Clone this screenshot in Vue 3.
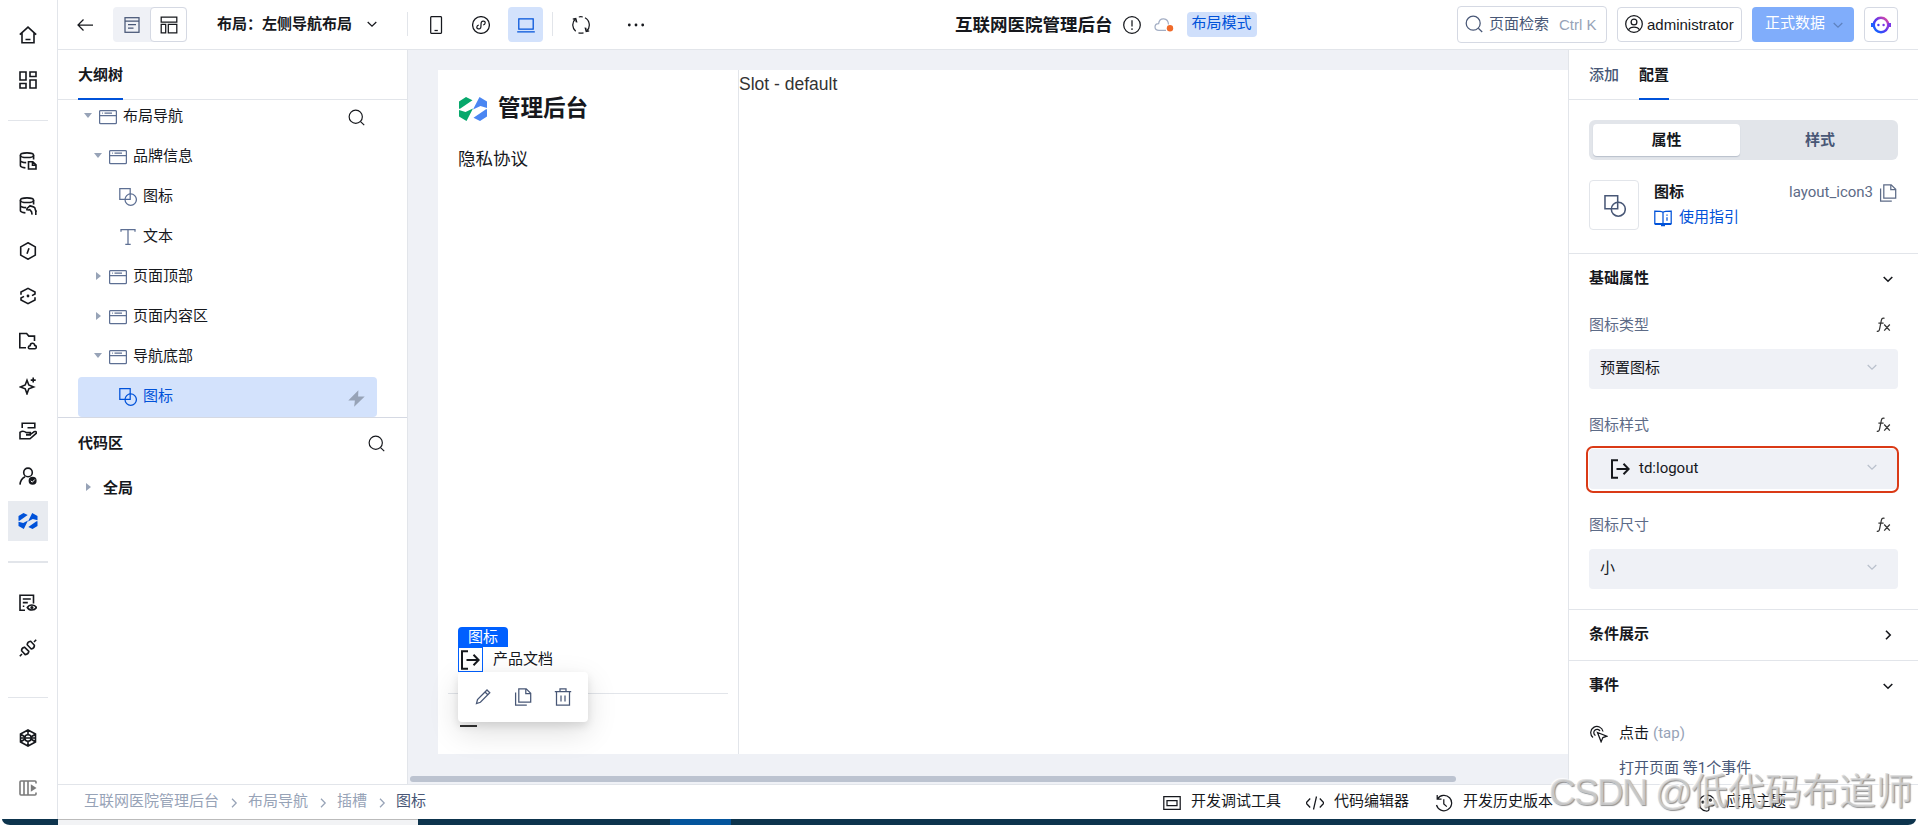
<template>
  <div class="screen">
    <div class="app">
      <aside class="rail">
        <template v-for="item in railItems" :key="item.name">
          <div v-if="item.line" class="rail-line" :class="item.name"></div>
          <div v-else class="rail-item" :class="[item.name, { active: item.active }]">
            <svg class="icon" viewBox="0 0 18 18" v-html="icons[item.name]"></svg>
          </div>
        </template>
      </aside>

      <div class="workspace">
        <header class="header">
          <svg class="icon back" viewBox="0 0 18 18" v-html="icons.back"></svg>
          <div class="view-switch">
            <div class="view-btn">
              <svg class="icon" viewBox="0 0 18 18" v-html="icons.page"></svg>
            </div>
            <div class="view-btn current">
              <svg class="icon" viewBox="0 0 18 18" v-html="icons.layout"></svg>
            </div>
          </div>
          <span class="layout-name">布局：左侧导航布局</span>
          <svg class="icon chevron" viewBox="0 0 18 18" v-html="icons.down"></svg>
          <i class="split"></i>
          <div class="device phone"><svg class="icon" viewBox="0 0 18 18" v-html="icons.phone"></svg></div>
          <div class="device"><svg class="icon" viewBox="0 0 18 18" v-html="icons.mini"></svg></div>
          <div class="device selected"><svg class="icon" viewBox="0 0 18 18" v-html="icons.laptop"></svg></div>
          <i class="split second"></i>
          <svg class="icon refresh" viewBox="0 0 18 18" v-html="icons.refresh"></svg>
          <svg class="icon more" viewBox="0 0 18 18" v-html="icons.more"></svg>

          <div class="app-title">
            <h1>互联网医院管理后台</h1>
            <svg class="icon" viewBox="0 0 18 18" v-html="icons.info"></svg>
            <svg class="icon cloud" viewBox="0 0 20 18" v-html="icons.cloud"></svg>
            <span class="mode">布局模式</span>
          </div>

          <div class="header-right">
            <div class="search-box">
              <svg class="icon" viewBox="0 0 18 18" v-html="icons.search"></svg>
              <span>页面检索</span>
              <em>Ctrl K</em>
            </div>
            <div class="user-box">
              <svg class="icon" viewBox="0 0 18 18" v-html="icons.account"></svg>
              <span>administrator</span>
            </div>
            <div class="data-btn">
              <span>正式数据</span>
              <svg class="icon" viewBox="0 0 18 18" v-html="icons.down"></svg>
            </div>
            <div class="bot-box">
              <svg class="bot" viewBox="0 0 20 20">
                <defs>
                  <linearGradient id="bot" x1="0" y1="1" x2="1" y2="0">
                    <stop offset="0.1" stop-color="#1263ff" />
                    <stop offset="0.5" stop-color="#5b35f0" />
                    <stop offset="1" stop-color="#f04a9a" />
                  </linearGradient>
                </defs>
                <circle cx="10" cy="10" r="7.2" fill="none" stroke="url(#bot)" stroke-width="2.4" />
                <path d="M0 8h3v4H0z" fill="#1e5fff" />
                <path d="M17 8h3v4h-3z" fill="#7a35e8" />
                <circle cx="7.4" cy="10" r="1.2" fill="#4a3cf5" />
                <circle cx="12.6" cy="10" r="1.2" fill="#7a35e8" />
              </svg>
            </div>
          </div>
        </header>

        <div class="body">
          <section class="outline">
            <div class="tabs"><span class="tab on">大纲树</span></div>
            <div class="tree">
              <div
                v-for="(node, i) in tree"
                :key="i"
                class="node"
                :class="['level-' + node.level, { chosen: node.chosen }]"
              >
                <i class="caret" :class="node.caret"></i>
                <svg class="icon" viewBox="0 0 18 18" v-html="icons[node.icon]"></svg>
                <span>{{ node.label }}</span>
                <svg v-if="i === 0" class="icon tail" viewBox="0 0 18 18" v-html="icons.search"></svg>
                <svg v-if="node.chosen" class="icon tail bolt" viewBox="0 0 18 18" v-html="icons.bolt"></svg>
              </div>
            </div>
            <div class="code-head">
              <span>代码区</span>
              <svg class="icon" viewBox="0 0 18 18" v-html="icons.search"></svg>
            </div>
            <div class="code-row">
              <i class="caret right"></i>
              <span>全局</span>
            </div>
          </section>

          <main class="canvas">
            <div class="page">
              <nav class="page-nav">
                <div class="brand">
                  <svg class="brand-logo" viewBox="0 0 28 24" v-html="icons.brand"></svg>
                  <b>管理后台</b>
                </div>
                <div class="nav-entry">隐私协议</div>
                <div class="nav-bottom">
                  <div class="picked">
                    <span class="picked-tag">图标</span>
                    <svg class="logout" viewBox="0 0 20 20" v-html="icons.logout"></svg>
                    <div class="picked-tools">
                      <svg class="icon" viewBox="0 0 18 18" v-html="icons.pencil"></svg>
                      <svg class="icon" viewBox="0 0 18 18" v-html="icons.copy"></svg>
                      <svg class="icon" viewBox="0 0 18 18" v-html="icons.trash"></svg>
                    </div>
                  </div>
                  <span>产品文档</span>
                </div>
                <div class="nav-fold"><i></i></div>
              </nav>
              <div class="page-slot">Slot - default</div>
            </div>
            <div class="scrollbar"></div>
          </main>

          <aside class="config">
            <div class="tabs">
              <span class="tab">添加</span>
              <span class="tab on">配置</span>
            </div>
            <div class="segment">
              <span class="on">属性</span>
              <span>样式</span>
            </div>
            <div class="comp">
              <div class="comp-thumb">
                <svg class="icon" viewBox="0 0 18 18" v-html="icons.shape"></svg>
              </div>
              <div class="comp-info">
                <b>图标</b>
                <a><svg class="icon" viewBox="0 0 18 18" v-html="icons.guide"></svg>使用指引</a>
              </div>
              <div class="comp-id">
                <span>layout_icon3</span>
                <svg class="icon" viewBox="0 0 18 18" v-html="icons.copy"></svg>
              </div>
            </div>
            <div class="group props">
              <div class="group-head">
                <span>基础属性</span>
                <svg class="icon" viewBox="0 0 18 18" v-html="icons.down"></svg>
              </div>
              <div v-for="field in fields" :key="field.label" class="field">
                <div class="field-label">
                  <span>{{ field.label }}</span>
                  <svg class="icon fx" viewBox="0 0 18 18" v-html="icons.fx"></svg>
                </div>
                <div class="select" :class="{ marked: field.marked }">
                  <svg v-if="field.icon" class="logout" viewBox="0 0 20 20" v-html="icons.logout"></svg>
                  <span>{{ field.value }}</span>
                  <svg class="icon arrow" viewBox="0 0 18 18" v-html="icons.down"></svg>
                </div>
              </div>
            </div>
            <div class="group">
              <div class="group-head">
                <span>条件展示</span>
                <svg class="icon" viewBox="0 0 18 18" v-html="icons.right"></svg>
              </div>
            </div>
            <div class="group">
              <div class="group-head">
                <span>事件</span>
                <svg class="icon" viewBox="0 0 18 18" v-html="icons.down"></svg>
              </div>
              <div class="event">
                <svg class="icon" viewBox="0 0 18 18" v-html="icons.tap"></svg>
                <span>点击</span>
                <em>(tap)</em>
              </div>
              <div class="event-desc">打开页面 等1个事件</div>
            </div>
          </aside>
        </div>

        <footer class="footer">
          <div class="crumbs">
            <template v-for="(crumb, i) in crumbs" :key="crumb">
              <svg v-if="i" class="icon" viewBox="0 0 18 18" v-html="icons.right"></svg>
              <span :class="{ last: i === crumbs.length - 1 }">{{ crumb }}</span>
            </template>
          </div>
          <div class="tools">
            <div v-for="tool in tools" :key="tool.icon" class="tool" :class="tool.icon">
              <svg class="icon" viewBox="0 0 18 18" v-html="icons[tool.icon]"></svg>
              <span>{{ tool.label }}</span>
            </div>
          </div>
        </footer>
      </div>
    </div>
    <div class="taskbar">
      <div class="task-light"></div>
      <div class="task-active"></div>
    </div>
    <div class="watermark"><span>CSDN @</span>低代码布道师</div>
  </div>
</template>

<script setup>
// 左侧导航
const railItems = [
  { name: 'home' },
  { name: 'board' },
  { name: 'line-1', line: true },
  { name: 'dbFile' },
  { name: 'dbLink' },
  { name: 'hexCode' },
  { name: 'layers' },
  { name: 'folder' },
  { name: 'sparkle' },
  { name: 'hand' },
  { name: 'member' },
  { name: 'brandMono', active: true },
  { name: 'line-2', line: true },
  { name: 'docEye' },
  { name: 'plug' },
  { name: 'line-3', line: true },
  { name: 'cube' },
  { name: 'expand' }
];

// 大纲树
const tree = [
  { label: '布局导航', level: 0, icon: 'box', caret: 'down' },
  { label: '品牌信息', level: 1, icon: 'box', caret: 'down' },
  { label: '图标', level: 2, icon: 'shape' },
  { label: '文本', level: 2, icon: 'text' },
  { label: '页面顶部', level: 1, icon: 'box', caret: 'right' },
  { label: '页面内容区', level: 1, icon: 'box', caret: 'right' },
  { label: '导航底部', level: 1, icon: 'box', caret: 'down' },
  { label: '图标', level: 2, icon: 'shape', chosen: true }
];

const fields = [
  { label: '图标类型', value: '预置图标' },
  { label: '图标样式', value: 'td:logout', icon: true, marked: true },
  { label: '图标尺寸', value: '小' }
];

const crumbs = ['互联网医院管理后台', '布局导航', '插槽', '图标'];

const tools = [
  { icon: 'debug', label: '开发调试工具' },
  { icon: 'code', label: '代码编辑器' },
  { icon: 'history', label: '开发历史版本' },
  { icon: 'theme', label: '应用主题' }
];

const db = '<ellipse cx="8" cy="3.2" rx="6.6" ry="2.3"/><path d="M1.4 3.2v10.3c0 1.2 2 2.1 5 2.4M14.6 3.2v4.3M1.4 8.2c0 1.2 2.6 2.3 5.8 2.4"/>';

// 图标路径
const icons = {
  home: '<path d="M.8 8.6 9 1.2l8.2 7.4M3 7v9.8h12V7M6.5 13.5h5"/>',
  board: '<path d="M1 1h6v8H1zM11 1h6v4.5h-6zM11 9h6v8h-6zM1 12.5h6V17H1z"/>',
  dbFile: db + '<path d="M9.5 9.8h4.3l3.2 3.1V17H9.5zM13.5 9.8v3.4H17"/>',
  dbLink: db + '<path d="M8.2 13.2c-.8-1.200 0-2.200 1-2.900l1.800-1.500c1.500.9 3.500.3 4.800 2l.8 2.700 1.200 1.200M8.500 13.200l2.200-.6 1.800 2 .6 3M16.800 14v4"/>',
  hexCode: '<path d="M9 .8l7.3 4.1v8.2L9 17.2l-7.3-4.1V4.9zM10 6.2l-2 5.6"/>',
  layers: '<path d="M2 7.800V5l7-3.700L16 5v2l-3 1.600M16 10.200V13l-7 3.700L2 13v-2l3-1.600"/><circle cx="9" cy="9" r="1.400" fill="currentColor" stroke="none"/>',
  folder: '<path d="M7 15.8H.8V1.500h6.800l2.200 2.600h5.700V9M10.500 16.700h5.300c2 0 2-3.200-.1-3.300-.5-3-4.300-2.700-4.500.2-2.200.3-2.300 3-.7 3.100z"/>',
  sparkle: '<path d="M8 3.200 9.800 8l4.800 2-4.800 1.800L8 16.800 6.200 11.800 1.400 10l4.800-2zM14.200.6v5M11.700 3.100h5"/>',
  hand: '<path d="M3.200 6V1.300h12.600v4.500H8.500M1 9.800v7h10l6.400-5.600c.3-1.900-1.800-2.200-3.200-.9l-2.800 2M1 10.300c2.400-1.800 4.200-1.400 6.300.3h3.900v2.300H7"/>',
  member: '<circle cx="9" cy="5.400" r="4.300"/><path d="M1 17.600c.2-3.800 2-6.300 5-7.900"/><circle cx="13.600" cy="13.800" r="4" fill="currentColor" stroke="none"/><path d="M11.800 13.800l1.500 1.400 2.500-2.700" stroke="#fff" stroke-width="1"/>',
  brandMono: '<path fill="currentColor" stroke="none" d="M-.5 4 4.500 1l4.200 2.100L.5 8.800h-1zM-.5 9.700l4.700 1.300L9 8.600 4.800 17l-5.300-3zM18.500 14l-5 3-4.200-2.100 8.200-5.700h1zM18.500 8.300 13.800 7 9 9.400 13.200 1l5.300 3z"/>',
  docEye: '<path d="M6 16.300H1V1.200h13.500v8.300M3.800 5h8M3.800 8.600h5M3.800 12.200h1.500"/><path d="M8.300 13.500c2-3.400 7.200-3.400 9.200 0-2 3.400-7.200 3.400-9.200 0z"/><circle cx="12.900" cy="13.500" r=".8"/>',
  plug: '<path d="M.8 17.200 3 15M2.600 11.800l3.600 3.800c2-.2 3.400-1.300 3.600-3.200L5.500 8.200C3.400 8.600 2.400 9.800 2.600 11.800zM15 3l2.200-2.200M8.200 5.800l4 4.200c2-.4 3.300-1.700 3.200-3.700l-3.700-4C9.600 2.500 8.300 3.800 8.200 5.800z"/>',
  cube: '<path d="M9 1l7.500 4v8L9 17l-7.500-4V5zM9 1v4.500M9 12.500V17M1.500 5 6 8M16.500 5 12 8M1.500 13 6 10M16.500 13 12 10M2 9h14"/><circle cx="9" cy="9" r="3.200"/>',
  expand: '<path d="M17 4.500V3a1 1 0 0 0-1-1H2a1 1 0 0 0-1 1v12a1 1 0 0 0 1 1h14a1 1 0 0 0 1-1v-1.500M5 2v14M9 2v14"/><path fill="currentColor" stroke="none" d="M11.800 5.300v7.400L17.500 9z"/>',
  back: '<path d="M17 9H2M7.500 3.500 2 9l5.500 5.500"/>',
  page: '<rect x="2" y="1.700" width="14" height="14.600"/><path d="M2 5.200h14M5 8.700h8M5 12h5.500"/>',
  layout: '<path d="M1.200 1.200h15.600v4.900H1.200zM1.200 8.300h4.500v8.500H1.200zM8.300 8.300h8.500v8.500H8.300z"/>',
  down: '<path d="M4.700 7 9 11.200 13.300 7"/>',
  right: '<path d="M7 4.700 11.200 9 7 13.300"/>',
  phone: '<rect x="3.700" y=".6" width="10.800" height="16.800" rx="1"/><path d="M7.500 14.500h3.300"/>',
  mini: '<circle cx="9" cy="9" r="8.400"/><path d="M6.800 9.200C4.500 9.300 4 12.800 6.500 12.900 8.700 13 9 11.800 9 9s.4-4 2.500-3.900c2.500.1 2 3.600-.3 3.700"/>',
  laptop: '<path d="M1.800 2.800h14.400v10.400H1.800zM.2 15.900h17.600"/>',
  refresh: '<path d="M3.700 15.200A8.200 8.200 0 0 1 3.300 3M6.800 1a8.200 8.200 0 0 1 4 0M13 1.800a8.200 8.200 0 0 1 1.700 13.200M11.500 16.800a8.200 8.200 0 0 1-5 0"/><path fill="currentColor" stroke="none" d="M3.400 2.200 5.600 6.600 3.600 6.200zM14.600 15.800l-2.200-4.400 2 .4z"/><path d="M.8 3.200l3-.6.900 3.200M17.200 14.800l-3 .6-.9-3.200"/>',
  more: '<g fill="currentColor" stroke="none"><circle cx="2.300" cy="9" r="1.400"/><circle cx="9" cy="9" r="1.400"/><circle cx="15.700" cy="9" r="1.400"/></g>',
  info: '<circle cx="9" cy="9" r="8.300"/><path d="M9 4.200v6.300M9 12.300v1.600"/>',
  cloud: '<path d="M12 14.400H5C-.3 14.400-.2 7.800 4.600 7.600 5.500 1 14.200 1.200 14.500 8.500"/><circle cx="16" cy="12.300" r="3.200" fill="#f06a2a" stroke="none"/>',
  search: '<circle cx="8.200" cy="8.200" r="7"/><path d="M13.300 13.300 17.200 17"/>',
  account: '<circle cx="9" cy="9" r="8.300"/><circle cx="9" cy="7" r="2.900"/><path d="M3.500 14.700c2-3.600 9-3.600 11 0"/>',
  box: '<rect x=".6" y="2.600" width="16.800" height="13" rx="1"/><path d="M.6 7.500h16.800M3 5.200h.8M5.500 5.200h7.500"/>',
  shape: '<path d="M6 11.300H.8V.7h10.400V6"/><circle cx="11.700" cy="11.600" r="5.700"/><path d="M11.200 5.500v5.800H6"/>',
  text: '<path d="M2 3.800V1.700h14v2.100M9 1.700v14.600M6.300 16.400h5.400"/>',
  bolt: '<path fill="currentColor" stroke="none" d="M11 .3.300 11h7L6.500 17.800 17.700 6.800h-7z"/>',
  brand: '<path fill="#07a86c" stroke="none" d="M0 4.500 7 0l6.500 3.200L1 11.800H0zM0 13l6.500 1.900L14 11.500 7.500 24 0 19.500z"/><path fill="#4a86f2" stroke="none" d="M28 19.500 21 24l-6.500-3.200L27 12.200h1zM28 11l-6.500-1.900L14 12.500 20.500 0 28 4.500z"/>',
  logout: '<path d="M8 1.200H2v17.600h6M6.500 10h12M13.500 4.800l5.200 5.200-5.200 5.200"/>',
  pencil: '<path d="M2.500 15.500l1-4L13 2l2.800 2.800-9.400 9.500zM11 4l2.800 2.800"/>',
  copy: '<path d="M4.800.9h7.400l4.500 4.300v8.900H4.800zM11.800.9v4.700h4.900M1.600 4.500v12.700h11.200"/>',
  trash: '<path d="M.8 3.500h16.400M6 3.500V.8h6v2.700M2.500 3.500v13.700h13V3.500M7 7.500v6M11 7.500v6"/>',
  guide: '<path d="M9 3.200C7.500 2 4 2 .8 2v12.600H9M9 3.200C10.500 2 14 2 17.200 2v12.600H9zM13 5.500v1.300M13 8.300v3.400"/><path d="M.8 15h16.400M7 16.400h4" stroke-width="1.800"/>',
  fx: '<path d="M10.500 2.400c-2-.9-2.900.3-3.300 2.600L5.600 13c-.4 2-1.200 2.800-2.800 2.200M4.400 7h5.200M10.200 8.500l5.600 6.200M15.800 8.500l-5.600 6.200"/>',
  tap: '<path d="M3 12.500A6.200 6.200 0 1 1 13 6.500M5.500 10.500A3.300 3.300 0 1 1 10 6M7.500 7.500l9.300 3.700-3.900 1.400-1.800 4.200z"/>',
  debug: '<path d="M.8 2.700h16.400v12.600H.8zM4 6.500h10v5H4z"/>',
  code: '<path d="M4.200 4.500 0 9l4.200 4.500M13.800 4.500 18 9l-4.200 4.500M10.500 2.500l-3 13"/>',
  history: '<path d="M2.500 4.800A7.700 7.700 0 1 1 1.500 11M2.200 1v4.200h4.300M8.800 5.200V10l3 2.600"/>',
  theme: '<path d="M8 17A8 8 0 1 1 17 9.500c0 2.200-2 2.500-4 2.200-3-.4-2 2-2 3.500S9.500 17.200 8 17z"/><circle cx="5" cy="8" r="1"/><circle cx="8" cy="4.800" r="1"/><circle cx="12.500" cy="6" r="1"/>'
};
</script>

<style>
body {
  background: #fff;
  overflow: hidden;
}
</style>

<style scoped>
.screen {
  position: relative;
  width: 1918px;
  height: 825px;
  overflow: hidden;
  font-family: Roboto, "Noto Sans CJK SC", sans-serif;
  font-size: 15px;
  line-height: 22px;
  color: #16181d;
}

.screen * {
  box-sizing: border-box;
}

em,
i {
  font-style: normal;
}

.app {
  display: flex;
  height: 819px;
}

.icon,
.logout {
  flex: none;
  width: 18px;
  height: 18px;
  fill: none;
  stroke: currentColor;
  stroke-width: 1.25;
}

/* 左侧窄栏 */
.rail {
  flex: none;
  width: 58px;
  padding-top: 15px;
  border-right: 1px solid #e2e5ea;
}

.rail-item {
  display: flex;
  align-items: center;
  justify-content: center;
  width: 40px;
  height: 40px;
  margin: 0 0 5px 8px;
}

.rail-item .icon {
  stroke-width: 1.6;
}

.rail-item.active {
  color: #0052d9;
  background: #e8ebf0;
}

.rail-item.active .icon {
  overflow: visible;
}

.rail-line {
  width: 40px;
  height: 1px;
  margin: 20px 0 20px 8px;
  background: #e2e5ea;
}

.rail-line.line-2 {
  height: 2px;
}

.rail-line.line-3 {
  margin-top: 29px;
}

.rail-item.expand {
  margin-top: 10px;
  color: #7b7b7b;
}

.workspace {
  flex: 1;
  display: flex;
  flex-direction: column;
  min-width: 0;
}

/* 顶栏 */
.header {
  flex: none;
  display: flex;
  align-items: center;
  height: 50px;
  padding: 0 20px 1px 18px;
  border-bottom: 1px solid #e2e5ea;
}

.header .back {
  margin-top: 1px;
}

.view-switch {
  display: flex;
  margin-left: 19px;
  height: 35px;
  border-radius: 4px;
  background: #eff1f6;
}

.view-btn {
  display: flex;
  align-items: center;
  justify-content: center;
  width: 37px;
  color: #485776;
}

.view-btn .icon {
  margin-top: 1px;
}

.view-btn.current {
  color: #16181d;
  border: 1px solid #d5d9e3;
  border-radius: 4px;
  background: #fff;
}

.layout-name {
  margin: -1px 11px 0 30px;
  font-weight: 600;
}

.split {
  width: 1px;
  height: 24px;
  margin: 0 10px 0 26px;
  background: #e2e5ea;
}

.split.second {
  margin: 0 19px 0 9px;
}

.device {
  display: flex;
  align-items: center;
  justify-content: center;
  width: 35px;
  height: 35px;
  margin-right: 10px;
  border-radius: 4px;
}

.device .icon {
  margin-top: 1px;
}

.device.selected {
  margin-right: 0;
  color: #0052d9;
  background: #d3e2fc;
}

.more {
  margin-left: 37px;
}

.refresh,
.more {
  margin-top: 1px;
}

.app-title {
  display: flex;
  align-items: center;
  margin-left: 310px;
}

.app-title h1 {
  margin: 2px 10px 0 0;
  font-size: 17.5px;
  font-weight: 700;
}

.app-title .icon {
  margin-top: 1px;
}

.app-title .cloud {
  width: 20px;
  margin: 1px 13px 0 13px;
  color: #a3aec4;
}

.mode {
  height: 25px;
  line-height: 23px;
  padding: 0 5px;
  border-radius: 4px;
  color: #0052d9;
  background: #cfdffb;
}

.header-right {
  display: flex;
  align-items: center;
  gap: 10px;
  margin-left: auto;
}

.header-right > div {
  display: flex;
  align-items: center;
  height: 35px;
  border: 1px solid #d5d9e3;
  border-radius: 4px;
}

.header-right .search-box {
  width: 150px;
  height: 37px;
  padding-left: 7px;
  color: #485776;
}

.search-box span {
  margin: 0 10px 0 6px;
}

.search-box em {
  color: #97a3b7;
}

.header-right .user-box {
  width: 125px;
  padding-left: 7px;
  gap: 4px;
}

.search-box em,
.user-box span {
  margin-top: 1px;
  font-family: "Liberation Sans", sans-serif;
}

.header-right .data-btn {
  width: 102px;
  padding-left: 13px;
  border: none;
  color: #fff;
  background: #80adfb;
}

.data-btn span {
  margin-top: -2px;
}

.data-btn .icon {
  margin: 2px 0 0 4px;
  color: #5e82bf;
}

.header-right .bot-box {
  width: 34px;
  justify-content: center;
}

.bot {
  width: 20px;
  height: 20px;
  margin-top: 1px;
}

.body {
  flex: 1;
  display: flex;
  min-height: 0;
}

/* 大纲树 */
.outline {
  flex: none;
  width: 350px;
  border-right: 1px solid #e2e5ea;
}

.tabs {
  display: flex;
  gap: 20px;
  height: 50px;
  padding-left: 20px;
  border-bottom: 1px solid #e2e5ea;
}

.tab {
  height: 50px;
  line-height: 50px;
  color: #485776;
  font-weight: 500;
}

.tab.on {
  color: #16181d;
  font-weight: 600;
  border-bottom: 2px solid #0052d9;
}

.tree {
  height: 321px;
  margin-top: -3px;
  padding: 0 30px 0 20px;
  border-bottom: 1px solid #d5d9e3;
}

.node {
  display: flex;
  align-items: center;
  height: 40px;
  padding-left: 6px;
  padding-right: 12px;
  border-radius: 4px;
}

.node > .icon {
  color: #5d6f93;
}

.node span {
  margin: -2px 0 0 6px;
}

.node .tail {
  margin-left: auto;
  color: #16181d;
  width: 17px;
  height: 17px;
}

.node .bolt {
  margin-top: 2px;
  color: #97a3b7;
}

.level-1 {
  padding-left: 16px;
}

.level-2 {
  padding-left: 26px;
}

.node.chosen {
  color: #0052d9;
  background: #d3e2fc;
}

.node.chosen > .icon:not(.tail) {
  color: #0052d9;
}

.caret {
  width: 15px;
  height: 9px;
}

.caret::before {
  content: "";
  display: block;
  width: 0;
  height: 0;
}

.caret.down::before {
  border: 4.5px solid transparent;
  border-top: 5px solid #97a3b7;
  border-bottom: none;
}

.caret.right::before {
  margin-left: 2px;
  margin-top: -1px;
  border: 4.5px solid transparent;
  border-left: 5px solid #97a3b7;
  border-right: none;
}

.code-head {
  display: flex;
  align-items: center;
  justify-content: space-between;
  height: 50px;
  padding: 0 22px 0 20px;
  font-weight: 600;
}

.code-head .icon {
  width: 17px;
  height: 17px;
}

.code-row {
  display: flex;
  align-items: center;
  height: 40px;
  padding-left: 26px;
  font-weight: 600;
}

.code-row span {
  margin-left: 4px;
}

/* 画布 */
.canvas {
  flex: 1;
  display: flex;
  flex-direction: column;
  padding: 20px 0 2px;
  min-width: 0;
  background: #eff1f6;
}

.page {
  display: flex;
  height: 684px;
  margin-left: 30px;
  background: #fff;
}

.page-nav {
  display: flex;
  flex-direction: column;
  width: 301px;
  padding: 20px 10px 0;
  border-right: 1px solid #e2e5ea;
  font-family: "Liberation Sans", "Noto Sans CJK SC", sans-serif;
}

.brand {
  display: flex;
  align-items: center;
  gap: 11px;
  height: 37px;
  padding-left: 11px;
}

.brand-logo {
  width: 28px;
  height: 24px;
}

.brand b {
  font-size: 22.5px;
  margin-top: 1px;
}

.nav-entry {
  margin-top: 21px;
  padding-left: 10px;
  font-size: 17.5px;
}

.nav-bottom {
  display: flex;
  align-items: center;
  gap: 10px;
  height: 47px;
  margin-top: auto;
  padding: 0 0 21px 10px;
  border-bottom: 1px solid #e2e5ea;
}

.nav-bottom > span {
  margin-top: -1px;
}

.picked {
  position: relative;
  display: flex;
  align-items: center;
  justify-content: center;
  width: 25px;
  height: 25px;
  padding-right: 2px;
  border: 1px solid #0060ff;
}

.logout {
  width: 20px;
  height: 20px;
  stroke-width: 2;
}

.picked-tag {
  position: absolute;
  left: -1px;
  bottom: 24px;
  width: 50px;
  height: 20px;
  line-height: 19px;
  text-align: center;
  color: #fff;
  background: #0060ff;
  border-radius: 4px 4px 0 0;
}

.picked-tools {
  position: absolute;
  left: -1px;
  top: 24px;
  display: flex;
  align-items: center;
  justify-content: space-between;
  width: 130px;
  height: 50px;
  padding: 0 16px;
  border-radius: 4px;
  color: #485776;
  background: #fff;
  box-shadow: 0 10px 30px rgba(0, 0, 0, 0.13), 0 4px 8px rgba(0, 0, 0, 0.1);
}

.nav-fold {
  height: 60px;
  padding: 31px 0 0 12px;
}

.nav-fold i {
  display: block;
  width: 17px;
  height: 2px;
  background: #333;
}

.page-slot {
  padding-top: 3px;
  font-family: "Liberation Sans", sans-serif;
  font-size: 17.5px;
  color: #333;
}

.scrollbar {
  width: 1046px;
  height: 6px;
  margin: auto 0 0 2px;
  border-radius: 3px;
  background: #bcc3d0;
}

/* 配置面板 */
.config {
  flex: none;
  width: 350px;
  overflow: hidden;
  border-left: 1px solid #e2e5ea;
  background: #fff;
}

.segment {
  display: flex;
  height: 40px;
  margin: 20px 20px 0;
  padding: 4px;
  border-radius: 6px;
  background: #e2e5ea;
}

.segment span {
  flex: 1;
  padding-left: 6px;
  line-height: 32px;
  text-align: center;
  font-weight: 600;
  color: #485776;
}

.segment .on {
  flex: none;
  width: 147px;
  padding-left: 0;
  border-radius: 4px;
  color: #16181d;
  background: #fff;
  box-shadow: 0 1px 1px #b8bfcb;
}

.comp {
  display: flex;
  height: 73px;
  margin-top: 20px;
  padding: 0 21px 0 20px;
}

.comp-thumb {
  display: flex;
  align-items: center;
  justify-content: center;
  width: 50px;
  height: 50px;
  padding: 1px 0 0 1px;
  border: 1px solid #e2e5ea;
  border-radius: 4px;
  color: #485776;
}

.comp-thumb .icon {
  width: 22px;
  height: 22px;
}

.comp-info {
  display: flex;
  flex-direction: column;
  margin-left: 15px;
  line-height: 25px;
}

.comp-info b {
  font-weight: 600;
}

.comp-info a {
  display: flex;
  align-items: center;
  gap: 7px;
  color: #0052d9;
}

.comp-info a .icon {
  margin-top: 1px;
}

.comp-id {
  display: flex;
  align-items: center;
  gap: 6px;
  height: 25px;
  margin-left: auto;
  color: #5d6b87;
}

.comp-id span {
  margin-top: -2px;
}

.group {
  border-top: 1px solid #e2e5ea;
}

.props {
  height: 356px;
}

.group-head {
  display: flex;
  align-items: center;
  justify-content: space-between;
  height: 50px;
  padding: 0 21px 0 20px;
  font-weight: 600;
}

.group-head span {
  margin-top: -2px;
}

.group-head .icon {
  stroke-width: 1.6;
}

.field {
  height: 100px;
  padding: 6px 20px 0 20px;
}

.field-label {
  display: flex;
  align-items: center;
  justify-content: space-between;
  height: 30px;
  padding-right: 6px;
  color: #5d6b87;
}

.fx {
  color: #333;
}

.select {
  position: relative;
  display: flex;
  align-items: center;
  height: 40px;
  margin-top: 9px;
  padding: 0 17px 0 11px;
  border-radius: 4px;
  background: #eff1f6;
}

.select span {
  margin-top: -3px;
}

.select .logout {
  margin: 0 9px 0 10px;
}

.select .arrow {
  margin: -4px 0 0 auto;
  color: #b9c0cc;
}

.select.marked::after {
  content: "";
  position: absolute;
  inset: -3px -1px -4px -3px;
  border: 2px solid #da3a16;
  border-radius: 7px;
}

.event {
  display: flex;
  align-items: center;
  height: 25px;
  margin-top: 10px;
  padding-left: 21px;
}

.event span,
.event em {
  margin: -2px 4px 0 11px;
}

.event em {
  margin-left: 0;
  color: #97a3b7;
}

.event-desc {
  margin-top: 11px;
  padding-left: 50px;
  color: #485776;
}

/* 底栏 */
.footer {
  flex: none;
  display: flex;
  justify-content: space-between;
  height: 35px;
  border-top: 1px solid #e2e5ea;
}

.crumbs {
  display: flex;
  align-items: center;
  padding-left: 26px;
  color: #97a3b7;
}

.crumbs span {
  margin-top: -2px;
}

.crumbs .icon {
  margin: 1px 5px 0 6px;
}

.crumbs .last {
  color: #485776;
}

.tools {
  display: flex;
  align-items: center;
  margin-right: 132px;
}

.tool {
  display: flex;
  align-items: center;
  gap: 10px;
  margin-left: 26px;
}

.tool .icon {
  margin-top: 1px;
}

.tool span {
  margin-top: -3px;
}

.tool.code {
  margin-left: 25px;
}

.tool.theme {
  margin-left: 145px;
}

.taskbar {
  display: flex;
  height: 6px;
  margin: 0 2px;
  padding-left: 56px;
  overflow: hidden;
  border-radius: 0 0 8px 8px / 0 0 6px 6px;
  background: #0d344d;
}

.task-light {
  width: 360px;
  border-top: 1px solid #bbb;
  background: #f2f3f5;
}

.task-active {
  width: 61px;
  margin-left: 252px;
  background: #04559c;
}

.watermark {
  position: absolute;
  left: 1549px;
  top: 770px;
  font-size: 37px;
  line-height: 46px;
  white-space: nowrap;
  color: rgba(215, 215, 215, 0.75);
  text-shadow: 1px 1px 1px rgba(110, 110, 110, 0.75), -1px -1px 1px rgba(255, 255, 255, 0.8);
}

.watermark span {
  font-family: "Liberation Sans", sans-serif;
  letter-spacing: -1.8px;
}
</style>
